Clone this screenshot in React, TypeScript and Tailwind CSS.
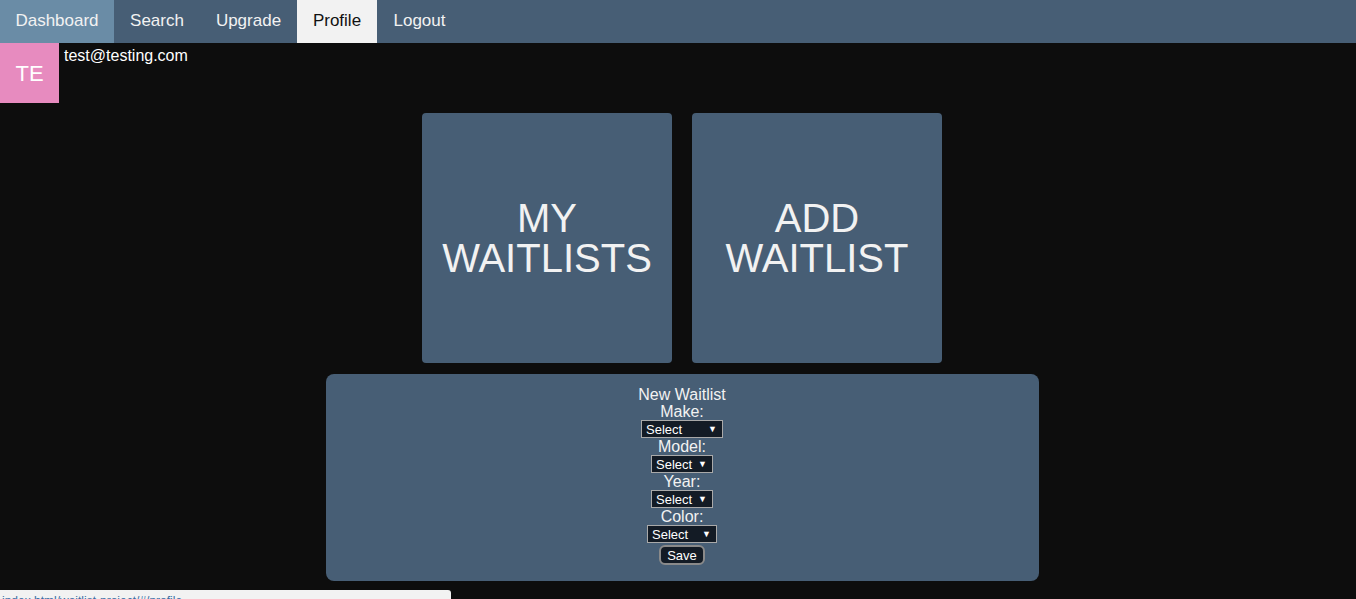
const tabs = [
  { label: "Dashboard", cls: "w-[114px] bg-[#6a8ca6] text-[#f2f2f2]" },
  { label: "Search", cls: "w-[86px] text-[#f2f2f2]" },
  { label: "Upgrade", cls: "w-[97px] text-[#f2f2f2]" },
  { label: "Profile", cls: "w-[80px] bg-[#f2f2f2] text-[#111]" },
  { label: "Logout", cls: "w-[85px] text-[#f2f2f2]" },
];

const fields = [
  { label: "Make:", width: "w-[82px]" },
  { label: "Model:", width: "w-[62px]" },
  { label: "Year:", width: "w-[62px]" },
  { label: "Color:", width: "w-[70px]" },
];

const FakeSelect = ({ width }: { width: string }) => (
  <div
    className={`${width} h-[18px] mx-auto flex items-center justify-between border border-[#a9a9a9] bg-[#131b25] pl-[4px] pr-[5px] text-[13px] leading-none text-white`}
  >
    <span>Select</span>
    <span className="text-[9px]">▼</span>
  </div>
);

const App = () => {
  return (
    <div className="min-h-[599px] w-full bg-[#0d0d0d] font-['Liberation_Sans',Arial,sans-serif] relative">
      {/* Top nav */}
      <div className="flex h-[43px] bg-[#475e75]">
        {tabs.map((t) => (
          <div
            key={t.label}
            className={`flex items-center justify-center pb-[2px] text-[17px] ${t.cls}`}
          >
            {t.label}
          </div>
        ))}
      </div>

      {/* User row */}
      <div className="flex">
        <div className="flex h-[60px] w-[59px] items-center justify-center bg-[#e78bbf] text-[22px] text-white">
          TE
        </div>
        <div className="pl-[5px] pt-[1px] text-[16px] text-white">test@testing.com</div>
      </div>

      {/* Cards */}
      <div className="flex justify-center gap-[20px] pl-[8px] pt-[10px]">
        <div className="flex h-[250px] w-[250px] items-center justify-center rounded-[4px] bg-[#475e75] text-center text-[40px] leading-[40px] text-[#f2f2f2]">
          MY
          <br />
          WAITLISTS
        </div>
        <div className="flex h-[250px] w-[250px] items-center justify-center rounded-[4px] bg-[#475e75] text-center text-[40px] leading-[40px] text-[#f2f2f2]">
          ADD
          <br />
          WAITLIST
        </div>
      </div>

      {/* New waitlist form */}
      <div className="flex justify-center pl-[8px] pt-[11px]">
        <div className="w-[713px] rounded-[8px] bg-[#475e75] pb-[16px] pt-[12px] text-center text-[16px] leading-[17px] text-[#f2f2f2]">
          <div>New Waitlist</div>
          {fields.map((f) => (
            <div key={f.label}>
              <div>{f.label}</div>
              <FakeSelect width={f.width} />
            </div>
          ))}
          <div className="mt-[2px] flex justify-center">
            <div className="flex h-[20px] w-[46px] items-center justify-center rounded-[6px] border-2 border-[#8a8a8a] bg-[#131b25] text-[13px] text-white">
              Save
            </div>
          </div>
        </div>
      </div>

      {/* Browser status bubble */}
      <div className="absolute bottom-0 left-0 h-[9px] w-[451px] overflow-hidden rounded-tr-[3px] bg-[#f2f2f2] pl-[2px] pt-[4px] text-[12px] leading-[14px] text-[#3b6ea5]">
        index.html/waitlist-project/#/profile
      </div>
    </div>
  );
};

export default App;
